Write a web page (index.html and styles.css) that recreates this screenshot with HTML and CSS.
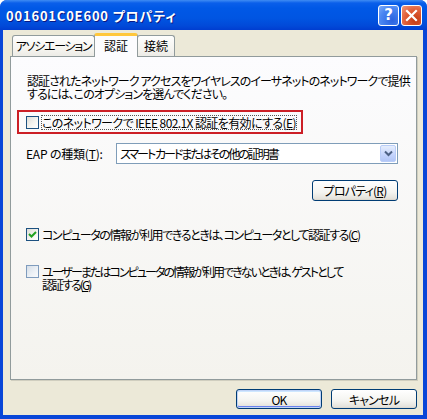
FILE: index.html
```html
<!DOCTYPE html>
<html lang="ja">
<head>
<meta charset="utf-8">
<link rel="stylesheet" href="styles.css">
</head>
<body>
<div class="window">
  <div class="titlebar">
    <span class="title">001601C0E600 プロパティ</span>
    <div class="caption-buttons">
      <span class="cbtn help">?</span>
      <span class="cbtn close">
        <svg width="13" height="13" viewBox="0 0 13 13"><path d="M2 2 L11 11 M11 2 L2 11" stroke="#fff" stroke-width="2.2" stroke-linecap="square"/></svg>
      </span>
    </div>
  </div>
  <div class="client">
    <div class="tabs">
      <div class="tab tab-assoc">アソシエーション</div>
      <div class="tab tab-auth active">認証</div>
      <div class="tab tab-conn">接続</div>
    </div>
    <div class="panel">
      <p class="desc">認証されたネットワーク アクセスをワイヤレスのイーサネットのネットワークで提供<br>するには、このオプションを選んでください。</p>
      <div class="highlight">
        <span class="chk"></span>
        <span class="focus">このネットワークで IEEE 802.1X 認証を有効にする(<u>E</u>)</span>
      </div>
      <div class="eap-row">
        <span class="eap-label">EAP の種類(<u>T</u>):</span>
        <div class="combo">
          <span class="combo-text">スマート カードまたはその他の証明書</span>
          <span class="combo-btn">
            <svg width="9" height="7" viewBox="0 0 9 7"><path d="M1 1.5 L4.5 5 L8 1.5" fill="none" stroke="#4D6185" stroke-width="2"/></svg>
          </span>
        </div>
      </div>
      <div class="prop-row">
        <span class="btn prop-btn">プロパティ(<u>R</u>)</span>
      </div>
      <div class="opt opt-1">
        <span class="chk checked">
          <svg width="11" height="11" viewBox="0 0 11 11"><path d="M2 5 L4.5 7.5 L9 3" fill="none" stroke="#21A121" stroke-width="2"/></svg>
        </span>
        <span class="opt-text">コンピュータの情報が利用できるときは、コンピュータとして認証する(<u>C</u>)</span>
      </div>
      <div class="opt opt-2">
        <span class="chk light"></span>
        <span class="opt-text">ユーザーまたはコンピュータの情報が利用できないときは、ゲストとして<br>認証する(<u>G</u>)</span>
      </div>
    </div>
    <div class="footer">
      <span class="btn default">OK</span>
      <span class="btn">キャンセル</span>
    </div>
  </div>
</div>
</body>
</html>
```
FILE: styles.css
```css
* { box-sizing: border-box; }
html, body { margin: 0; padding: 0; }
body {
  width: 427px;
  height: 419px;
  overflow: hidden;
  background: #fff;
  font-family: "Noto Sans CJK JP", "Liberation Sans", sans-serif;
  font-size: 12px;
  color: #000;
}
.window {
  width: 427px;
  height: 419px;
  display: flex;
  flex-direction: column;
  background: #0846D8;
  border-radius: 7px 7px 0 0;
  overflow: hidden;
}
.titlebar {
  height: 30px;
  flex: none;
  display: flex;
  align-items: center;
  justify-content: space-between;
  padding: 0 5px 0 6px;
  background: linear-gradient(to bottom, #3F8CF3 0px, #0A5FEA 3px, #0058E6 8px, #0055E2 18px, #0149D8 26px, #003DD0 30px);
}
.title {
  color: #fff;
  font-weight: bold;
  font-size: 13px;
  letter-spacing: 0.8px;
  text-shadow: 1px 1px 0 #0A1883;
  font-feature-settings: "palt";
}
.caption-buttons {
  display: flex;
  gap: 2px;
}
.cbtn {
  width: 21px;
  height: 21px;
  border: 1px solid #fff;
  border-radius: 3px;
  display: flex;
  align-items: center;
  justify-content: center;
}
.help {
  background: radial-gradient(circle at 70% 75%, #2A62E0 0%, #4A86F2 60%, #7EACF8 100%);
  color: #fff;
  font-family: "DejaVu Sans", sans-serif;
  font-weight: bold;
  font-size: 15px;
}
.close {
  background: radial-gradient(circle at 70% 75%, #C33A12 0%, #E2603A 55%, #EE9A7E 100%);
}
.client {
  flex: 1;
  margin: 0 4px 4px 3px;
  background: #ECE9D8;
  padding: 3px 6px 0 7px;
  display: flex;
  flex-direction: column;
}
.tabs {
  height: 24px;
  display: flex;
  align-items: flex-end;
  padding-left: 2px;
  position: relative;
  z-index: 1;
}
.tab {
  height: 21px;
  border: 1px solid #919B9C;
  border-bottom: none;
  border-radius: 3px 3px 0 0;
  background: linear-gradient(to bottom, #FEFEFE, #F4F3EE 70%, #ECEBE6);
  text-align: center;
  line-height: 19px;
  font-feature-settings: "palt";
  white-space: nowrap;
  margin-bottom: 1px;
  overflow: hidden;
}
.tab-assoc { width: 83px; letter-spacing: -1.3px; }
.tab-auth { width: 44px; }
.tab-conn { width: 38px; margin-left: -1px; }
.tab.active {
  height: 24px;
  margin-bottom: 0;
  background: #FCFCFE;
  border-top: 3px solid #FFC73C;
  line-height: 19px;
  margin-left: -1px;
  position: relative;
  z-index: 2;
}
.panel {
  width: 407px;
  height: 324px;
  margin-top: -1px;
  border: 1px solid #919B9C;
  background: linear-gradient(to bottom, #FCFCFE, #F4F3EE);
  padding: 17px 16px 0 15px;
  box-shadow: 1px 1px 0 #D0CEBF;
}
.desc {
  margin: 0 0 0 1px;
  line-height: 13px;
  letter-spacing: -0.9px;
  font-feature-settings: "palt";
  white-space: nowrap;
}
.highlight {
  margin: 10px 0 0 -9px;
  width: 286px;
  height: 24px;
  border: 2px solid #CC1F26;
  display: flex;
  align-items: center;
  padding-left: 7px;
  font-feature-settings: "palt";
  letter-spacing: -0.6px;
  white-space: nowrap;
}
.focus {
  margin-left: 2px;
  padding: 0 1px;
  outline: 1px dotted #555;
  outline-offset: -1px;
  line-height: 15px;
}
.chk {
  width: 13px;
  height: 13px;
  flex: none;
  border: 1px solid #1C5180;
  background: linear-gradient(135deg, #DCDCD7 0%, #F4F4F0 55%, #FFFFFF 100%);
  display: inline-flex;
  align-items: center;
  justify-content: center;
}
.chk.light {
  border-color: #7F9CBD;
  background: linear-gradient(135deg, #D5DEE8, #EEF2F6 60%, #FAFBFC);
}
.eap-row {
  margin-top: 9px;
  display: flex;
  align-items: center;
  white-space: nowrap;
}
.eap-label {
  width: 90px;
  flex: none;
  letter-spacing: -0.2px;
  font-feature-settings: "palt";
}
.combo {
  width: 282px;
  height: 21px;
  border: 1px solid #7F9DB9;
  background: #fff;
  display: flex;
  align-items: center;
  justify-content: space-between;
  padding: 0 1px 0 3px;
}
.combo-text {
  font-feature-settings: "palt";
  letter-spacing: -2px;
}
.combo-btn {
  width: 16px;
  height: 17px;
  border: 1px solid #B9CDF8;
  border-radius: 2px;
  background: linear-gradient(to bottom, #E6EEFC, #C3D3FD 60%, #B2C6F6);
  display: flex;
  align-items: center;
  justify-content: center;
}
.prop-row {
  margin-top: 16px;
  display: flex;
  justify-content: flex-end;
  padding-right: 2px;
}
.btn {
  width: 86px;
  height: 21px;
  border: 1px solid #003C74;
  border-radius: 3px;
  background: linear-gradient(to bottom, #FFFFFF, #F4F4F0 60%, #E3E1DA 95%, #D6D0C5);
  display: flex;
  align-items: center;
  justify-content: center;
  font-feature-settings: "palt";
  letter-spacing: -0.8px;
  white-space: nowrap;
}
.opt {
  display: flex;
  align-items: flex-start;
  white-space: nowrap;
  font-feature-settings: "palt";
  color: #000;
}
.opt-text {
  margin-left: 3px;
  line-height: 13px;
}
.opt-1 { margin-top: 27px; letter-spacing: -1.4px; }
.opt-2 { margin-top: 24px; letter-spacing: -1.95px; }
.footer {
  margin-top: 9px;
  display: flex;
  justify-content: flex-end;
  gap: 9px;
}
.footer .btn { height: 20px; }
.btn.default {
  box-shadow: inset 0 0 0 1px #C0D3F6, inset 0 1px 0 1px #CEE7FF, inset 0 -1px 0 1px #6982EE;
}
u { text-decoration: underline; text-underline-offset: 1px; }
```
